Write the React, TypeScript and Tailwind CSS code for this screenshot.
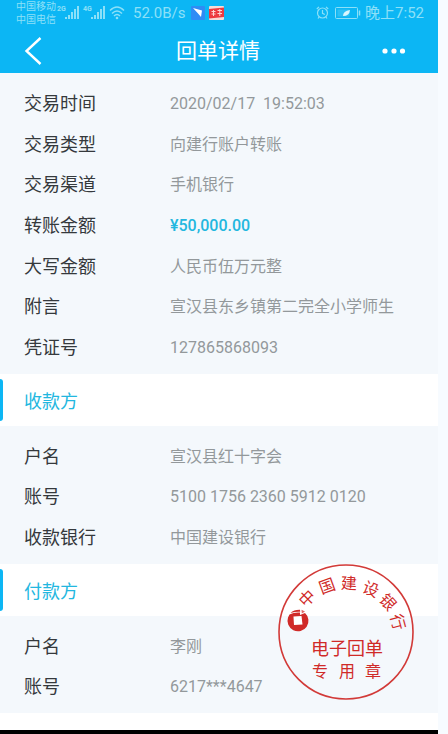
import { clsx } from "clsx";

type Field = {
  label: string;
  value: string;
  highlight?: boolean;
};

const transaction: Field[] = [
  { label: "交易时间", value: "2020/02/17  19:52:03" },
  { label: "交易类型", value: "向建行账户转账" },
  { label: "交易渠道", value: "手机银行" },
  { label: "转账金额", value: "¥50,000.00", highlight: true },
  { label: "大写金额", value: "人民币伍万元整" },
  { label: "附言", value: "宣汉县东乡镇第二完全小学师生" },
  { label: "凭证号", value: "127865868093" },
];

const payee: Field[] = [
  { label: "户名", value: "宣汉县红十字会" },
  { label: "账号", value: "5100 1756 2360 5912 0120" },
  { label: "收款银行", value: "中国建设银行" },
];

const payer: Field[] = [
  { label: "户名", value: "李刚" },
  { label: "账号", value: "6217***4647" },
];

// characters along the top arc of the stamp
const arc = [
  { char: "中", x: 29, y: 34, angle: -45 },
  { char: "国", x: 49, y: 22, angle: -20 },
  { char: "建", x: 71, y: 19, angle: 2 },
  { char: "设", x: 93, y: 25, angle: 22 },
  { char: "银", x: 110, y: 38, angle: 48 },
  { char: "行", x: 120, y: 58, angle: 75 },
];

function SignalIcon() {
  return (
    <svg width="15" height="14" viewBox="0 0 15 14" fill="currentColor">
      <rect x="0" y="11" width="2" height="2" />
      <rect x="3" y="9" width="2" height="4" />
      <rect x="6" y="6" width="2" height="7" />
      <rect x="9" y="3" width="2" height="10" />
      <rect x="12" y="0" width="2" height="13" />
    </svg>
  );
}

function WifiIcon() {
  return (
    <svg width="16" height="14" viewBox="0 0 16 14" fill="none" stroke="currentColor" strokeWidth="1.5">
      <path d="M1 4.500 Q8 -2.500 15 4.500" />
      <path d="M3 7.500 Q8 2.500 13 7.500" />
      <path d="M5 10 Q8 7 11 10" />
      <circle cx="8" cy="12" r="1.3" fill="currentColor" stroke="none" />
    </svg>
  );
}

function StatusBar() {
  return (
    <div className="flex h-[25px] items-center pl-4 pr-[14px] text-[#8ce0f8]">
      <div className="w-[41px] whitespace-nowrap text-[10px] leading-[13px]">
        <div>中国移动</div>
        <div>中国电信</div>
      </div>
      <span className="h-4 w-2 text-[7px] font-bold leading-[9px]">2G</span>
      <SignalIcon />
      <span className="ml-[3px] h-4 w-2 text-[7px] font-bold leading-[9px]">4G</span>
      <SignalIcon />
      <div className="ml-[3px]">
        <WifiIcon />
      </div>
      <span className="ml-2 w-[58px] text-[15px] leading-6">52.0B/s</span>
      <svg width="14" height="14" viewBox="0 0 14 14">
        <rect width="14" height="14" rx="1" fill="#2f8cf5" />
        <path d="M2 2 L11 4.500 L10 11 L7.500 8 Z" fill="#fff" />
      </svg>
      <svg className="ml-1" width="15" height="14" viewBox="0 0 15 14">
        <rect width="15" height="14" rx="1" fill="#f6dcd8" />
        <path d="M0 3 L15 1.500 V11 L0 12.500 Z" fill="#ed3b40" />
        <path
          d="M2.500 5.500 H6.500 M4.500 4 V10 M2.500 8 H6.500 M8.500 4.500 H13 M10.800 3 V10 M8.500 7.500 H13"
          stroke="#fbd9d6"
          fill="none"
        />
      </svg>
      <div className="ml-auto flex items-center">
        <svg width="13" height="13" viewBox="0 0 13 13" fill="none" stroke="currentColor" strokeWidth="1.2">
          <circle cx="6.500" cy="7" r="5" />
          <path d="M6.500 4 V7.300 L8.800 8.500 M0.800 3 L3 0.900 M12.200 3 L10 0.900 M3 11.200 L2 12.500 M10 11.200 L11 12.500" />
        </svg>
        <svg className="ml-[6px]" width="26" height="12" viewBox="0 0 26 12" fill="none" stroke="currentColor">
          <rect x="0.500" y="0.500" width="22" height="11" rx="1" />
          <path d="M24.500 3.500 V8.500" strokeWidth="1.500" />
          <rect x="2.500" y="2.500" width="12" height="7" fill="currentColor" fillOpacity="0.250" stroke="none" />
          <path d="M8 9 Q8 4 15 3 Q14.500 9 8 9 Z" fill="#d9f6fe" stroke="none" />
        </svg>
        <span className="ml-1 text-[15px] leading-6">晚上7:52</span>
      </div>
    </div>
  );
}

function NavBar() {
  return (
    <div className="grid h-12 grid-cols-[1fr_auto_1fr] items-center pl-6 pr-8 pt-[3px] text-white">
      <button type="button" aria-label="返回" className="justify-self-start">
        <svg width="18" height="28" viewBox="0 0 18 28" fill="none" stroke="currentColor" strokeWidth="2.400">
          <path d="M16.500 1 L2.500 14 L16.500 27" />
        </svg>
      </button>
      <h1 className="pl-[6px] text-[21px] leading-8">回单详情</h1>
      <button type="button" aria-label="更多" className="justify-self-end">
        <svg width="24" height="8" viewBox="0 0 24 8" fill="currentColor">
          <circle cx="3" cy="4" r="2.600" />
          <circle cx="12" cy="4" r="2.600" />
          <circle cx="20.500" cy="4" r="2.600" />
        </svg>
      </button>
    </div>
  );
}

function Fields({ items, className }: { items: Field[]; className: string }) {
  return (
    <dl className={clsx("grid auto-rows-fr px-6 pb-[6px] pt-[11px]", className)}>
      {items.map((item) => (
        <div key={item.label} className="flex items-center">
          <dt className="w-[146px] shrink-0 text-[18px] leading-6 text-[#35393c]">
            {item.label}
          </dt>
          <dd
            className={clsx(
              "whitespace-pre text-base leading-6",
              item.highlight ? "font-medium text-[#23b7df]" : "text-[#93989b]"
            )}
          >
            {item.value}
          </dd>
        </div>
      ))}
    </dl>
  );
}

function SectionTitle({ children }: { children: string }) {
  return (
    <div className="flex h-[52px] items-center bg-white">
      <span className="h-[42px] w-[3px] rounded-r-sm bg-[#0cb6f4]" />
      <h2 className="pl-[21px] pt-[3px] text-[18px] leading-6 text-[#23b7df]">{children}</h2>
    </div>
  );
}

function Stamp() {
  return (
    <svg
      className="absolute right-6 top-0"
      width="136"
      height="136"
      viewBox="0 0 136 136"
      fill="#d02a28"
      textAnchor="middle"
    >
      <circle cx="68" cy="68" r="67" fill="none" stroke="#d23a38" strokeWidth="1.600" />
      {arc.map((item) => (
        <text
          key={item.char}
          transform={`translate(${item.x} ${item.y}) rotate(${item.angle})`}
          y="6"
          fontSize="16"
        >
          {item.char}
        </text>
      ))}
      <g transform="translate(20 57)">
        <path d="M-8.500 -6.500 Q-4 -9 2 -8.500 L2 -6 L7 -8 A10.500 10.500 0 1 1 -10 -3.500 Z" />
        <path d="M-7.500 -8 Q-4 -11.500 2 -11.300 L2.200 -9.300 Q-3 -9.500 -7.500 -8 Z" />
        <path d="M3.500 -11.300 L7 -9.500 L3.800 -7.500 Z" fillOpacity="0.700" />
        <path d="M-4.500 -4.500 L3.500 -5 L4.500 3.500 L-4 4 Z" fill="#fff" />
      </g>
      <text x="69" y="91" fontSize="18">电子回单</text>
      <text x="42" y="113" fontSize="16">专</text>
      <text x="69" y="113" fontSize="16">用</text>
      <text x="95" y="113" fontSize="16">章</text>
    </svg>
  );
}

export default function App() {
  return (
    <div className="bg-[#f7fbff] pr-[10px] font-[Roboto,'Noto_Sans_CJK_SC',sans-serif]">
      <main className="bg-[#f4f8fc]">
        <header className="bg-[#0cb6f4]">
          <StatusBar />
          <NavBar />
        </header>

        <Fields items={transaction} className="min-h-[301px]" />

        <section>
          <SectionTitle>收款方</SectionTitle>
          <Fields items={payee} className="min-h-[138px]" />
        </section>

        <section className="relative">
          <SectionTitle>付款方</SectionTitle>
          <Fields items={payer} className="min-h-[97px]" />
          <Stamp />
        </section>

        <div className="h-[21px] border-b-4 border-black bg-white" />
      </main>
    </div>
  );
}
